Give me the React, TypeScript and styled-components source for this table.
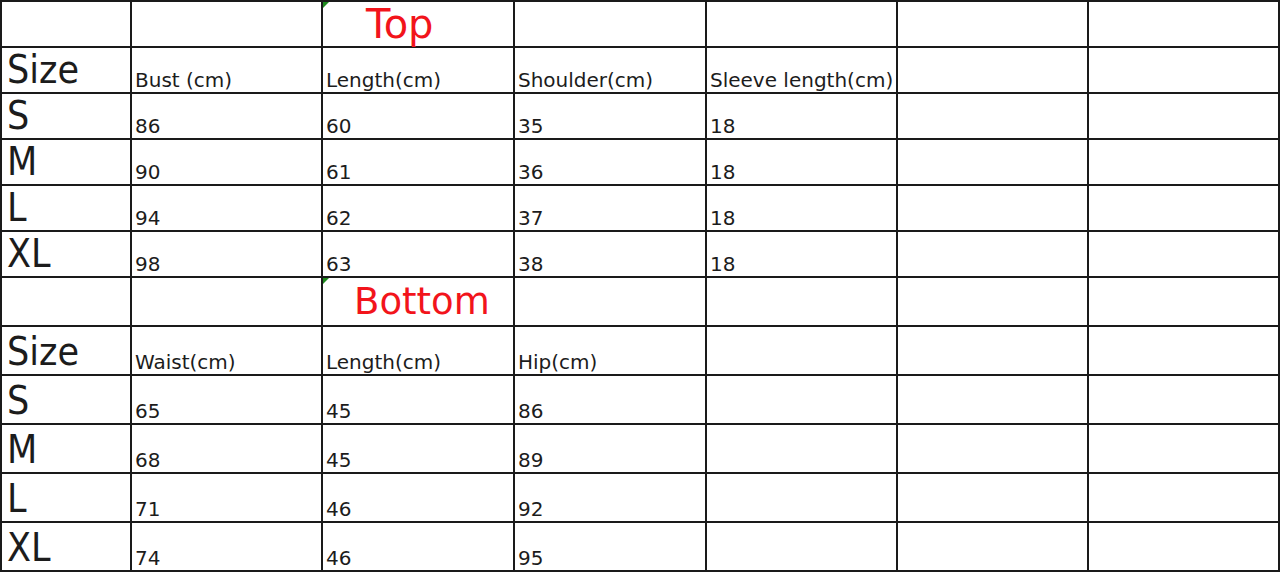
import React from 'react';
import styled, { createGlobalStyle } from 'styled-components';

const GlobalStyle = createGlobalStyle`
  html, body {
    margin: 0;
    padding: 0;
    background: #fff;
  }
  body {
    font-family: "DejaVu Sans", Verdana, sans-serif;
    color: #1c1c1c;
  }
`;

type Kind = 'empty' | 'size' | 'head' | 'value' | 'title';

interface Cell {
  text?: string;
  kind: Kind;
  marker?: boolean;
  indent?: number;
  big?: boolean;
}

const Sheet = styled.div`
  display: grid;
  grid-template-columns: 130px 191px 192px 192px 191px 191px 191px;
  grid-template-rows: repeat(6, 46px) repeat(6, 49px);
  width: 1280px;
  box-sizing: border-box;
  border-top: 2px solid #1a1a1a;
  border-left: 2px solid #1a1a1a;
  overflow: hidden;
`;

const fontSize = (kind: Kind, big?: boolean) => {
  if (kind === 'size') return '39px';
  if (kind === 'title') return big ? '40px' : '37px';
  return '20px';
};

const CellBox = styled.div<{ $kind: Kind; $indent: number; $big?: boolean }>`
  position: relative;
  box-sizing: border-box;
  border-right: 2px solid #1a1a1a;
  border-bottom: 2px solid #1a1a1a;
  display: flex;
  align-items: ${(p) => (p.$kind === 'title' ? 'center' : 'flex-end')};
  padding-left: ${(p) => p.$indent}px;
  white-space: nowrap;
  font-family: ${(p) =>
    p.$kind === 'size' ? '"DejaVu Sans Condensed", "DejaVu Sans", sans-serif' : '"DejaVu Sans", Verdana, sans-serif'};
  font-size: ${(p) => fontSize(p.$kind, p.$big)};
  line-height: ${(p) => (p.$kind === 'title' ? '42px' : 'normal')};
  color: ${(p) => (p.$kind === 'title' ? '#f2141b' : '#1c1c1c')};
`;

const Marker = styled.span`
  position: absolute;
  top: 0;
  left: 0;
  width: 0;
  height: 0;
  border-top: 6px solid #1e8a1e;
  border-right: 6px solid transparent;
`;

const blank = (): Cell => ({ kind: 'empty' });

const rowOf = (size: string, values: string[]): Cell[] => {
  const cells: Cell[] = [{ text: size, kind: 'size', indent: 5 }];
  for (let i = 0; i < 6; i++) {
    cells.push(values[i] ? { text: values[i], kind: 'value', indent: 3 } : blank());
  }
  return cells;
};

const headRow = (heads: string[]): Cell[] => {
  const cells: Cell[] = [{ text: 'Size', kind: 'size', indent: 5 }];
  for (let i = 0; i < 6; i++) {
    cells.push(heads[i] ? { text: heads[i], kind: 'head', indent: 3 } : blank());
  }
  return cells;
};

const titleRow = (title: string, indent: number, big: boolean): Cell[] => [
  blank(),
  blank(),
  { text: title, kind: 'title', marker: true, indent, big },
  blank(),
  blank(),
  blank(),
  blank(),
];

const rows: Cell[][] = [
  titleRow('Top', 43, true),
  headRow(['Bust (cm)', 'Length(cm)', 'Shoulder(cm)', 'Sleeve length(cm)']),
  rowOf('S', ['86', '60', '35', '18']),
  rowOf('M', ['90', '61', '36', '18']),
  rowOf('L', ['94', '62', '37', '18']),
  rowOf('XL', ['98', '63', '38', '18']),
  titleRow('Bottom', 31, false),
  headRow(['Waist(cm)', 'Length(cm)', 'Hip(cm)']),
  rowOf('S', ['65', '45', '86']),
  rowOf('M', ['68', '45', '89']),
  rowOf('L', ['71', '46', '92']),
  rowOf('XL', ['74', '46', '95']),
];

const App: React.FC = () => {
  return (
    <>
      <GlobalStyle />
      <Sheet>
        {rows.map((row, r) =>
          row.map((cell, c) => (
            <CellBox key={`${r}-${c}`} $kind={cell.kind} $indent={cell.indent ?? 3} $big={cell.big}>
              {cell.marker && <Marker />}
              {cell.text}
            </CellBox>
          ))
        )}
      </Sheet>
    </>
  );
};

export default App;
